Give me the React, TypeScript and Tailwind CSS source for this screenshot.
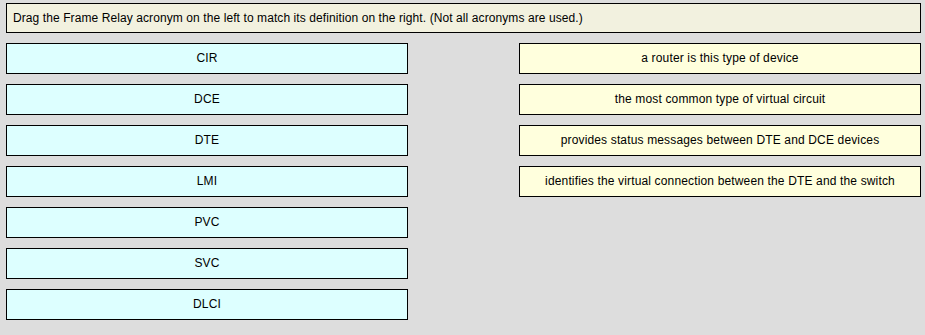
const acronyms = ['CIR', 'DCE', 'DTE', 'LMI', 'PVC', 'SVC', 'DLCI'];

const definitions = [
  'a router is this type of device',
  'the most common type of virtual circuit',
  'provides status messages between DTE and DCE devices',
  'identifies the virtual connection between the DTE and the switch',
];

const App = () => {
  return (
    <div
      className="w-[925px] h-[335px] bg-[#dddddd] pt-[3px] pl-[6px] text-[12px] tracking-[0.15px] text-black"
      style={{ fontFamily: '"Liberation Sans", Arial, sans-serif' }}
    >
      {/* Instructions */}
      <div className="w-[915px] h-[30px] border border-black bg-[#f2f1df] flex items-center pl-[6px] tracking-[0.09px]">
        Drag the Frame Relay acronym on the left to match its definition on the right. (Not all acronyms are used.)
      </div>

      <div className="flex gap-[111px] mt-[10px]">
        {/* Acronyms */}
        <div className="flex flex-col gap-[10px]">
          {acronyms.map(a => (
            <div
              key={a}
              className="w-[402px] h-[31px] border border-black bg-[#ddffff] flex items-center justify-center pb-[2px]"
            >
              {a}
            </div>
          ))}
        </div>

        {/* Definitions */}
        <div className="flex flex-col gap-[10px]">
          {definitions.map(d => (
            <div
              key={d}
              className="w-[402px] h-[31px] border border-black bg-[#ffffdd] flex items-center justify-center pb-[2px]"
            >
              {d}
            </div>
          ))}
        </div>
      </div>
    </div>
  );
};

export default App;
